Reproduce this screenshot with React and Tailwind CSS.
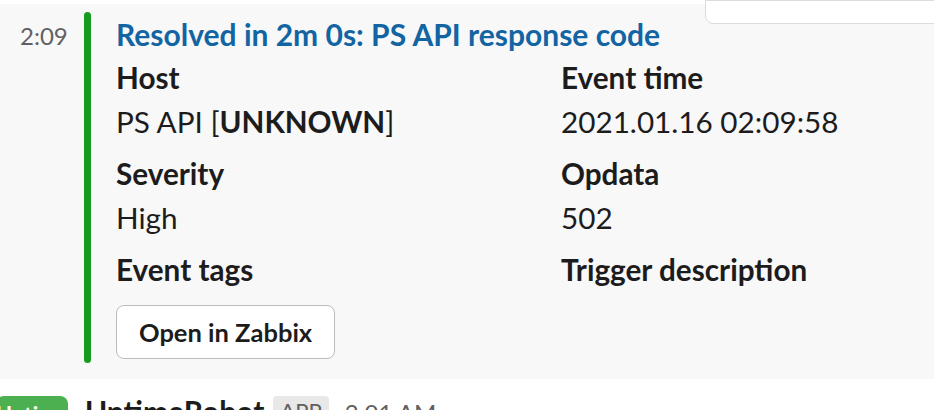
export default function App() {
    const fields = [
        { label: 'Host', value: <>PS API [<span className="font-bold">UNKNOWN</span>]</> },
        { label: 'Event time', value: '2021.01.16 02:09:58' },
        { label: 'Severity', value: 'High' },
        { label: 'Opdata', value: '502' },
        { label: 'Event tags', value: null },
        { label: 'Trigger description', value: null },
    ];

    return (
        <div className="w-[934px] h-[410px] overflow-hidden bg-white text-[#1d1c1d] font-['Lato',sans-serif]">
            <div className="h-[4px]" />

            {/* hovered message */}
            <div className="relative flex bg-[#f8f8f8] pt-[8px] pb-[16px]">
                <div className="absolute right-[-10px] top-[-4px] w-[239px] h-[24px] bg-white border border-[#dcdcdc] rounded-b-[8px] rounded-tl-none" />

                <div className="w-[84px] shrink-0 pl-[20px] pt-[2px] text-[24px] leading-[44px] text-[#616061]">2:09</div>
                <div className="w-[7px] shrink-0 rounded-full bg-[#169b1f]" />
                <div className="pl-[25px] pb-[4px]">
                    <div className="text-[30px] leading-[44px] font-bold text-[#1264a3] whitespace-nowrap">
                        Resolved in 2m 0s: PS API response code
                    </div>
                    <div className="grid grid-cols-[445px_445px] gap-y-[8px] text-[29.7px] leading-[44px] whitespace-nowrap">
                        {fields.map((f) => (
                            <div key={f.label}>
                                <div className="font-bold">{f.label}</div>
                                {f.value && <div>{f.value}</div>}
                            </div>
                        ))}
                    </div>
                    <button className="mt-[13px] h-[54px] px-[22px] rounded-[8px] border border-[#bcbcbc] bg-white text-[25.5px] font-bold text-[#1d1c1d]">
                        Open in Zabbix
                    </button>
                </div>
            </div>

            {/* next message */}
            <div className="flex items-start pt-[17px]">
                <div className="w-[72px] h-[72px] -ml-[4px] shrink-0 rounded-[8px] bg-[#4caf50] flex justify-center pt-[6px]">
                    <span className="text-white font-bold text-[22px] leading-[26px]">Uptime</span>
                </div>
                <div className="ml-[17px] flex items-start">
                    <span className="text-[30px] font-bold leading-[30px]">UptimeRobot</span>
                    <span className="ml-[9px] bg-[#e8e8e8] text-[#616061] rounded-[4px] px-[7px] text-[22px] leading-[30px]">APP</span>
                    <span className="ml-[16px] text-[#616061] text-[24px] leading-[30px] pt-[2px]">2:01 AM</span>
                </div>
            </div>
        </div>
    );
}
